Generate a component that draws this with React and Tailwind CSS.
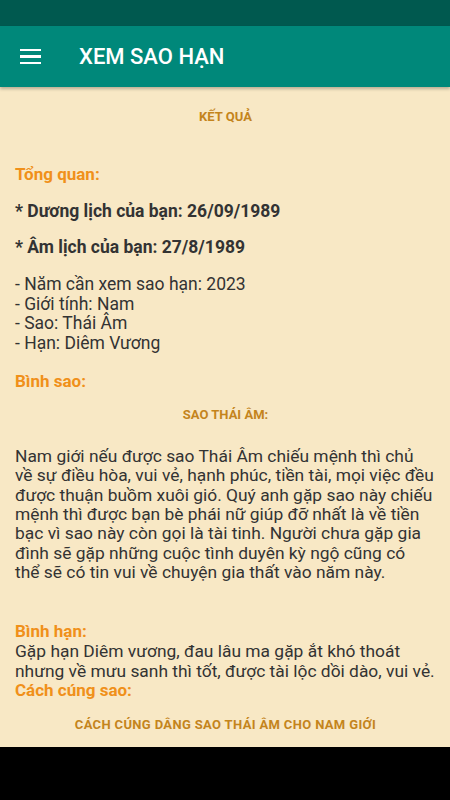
import React from "react";

export default function App() {
  const font = { fontFamily: "Roboto, 'Noto Sans', sans-serif" };
  return (
    <div className="w-[450px] h-[800px] flex flex-col bg-black overflow-hidden" style={font}>
      <div className="h-[26px] bg-[#00594f] shrink-0" />
      <div className="h-[61px] bg-[#00887a] shrink-0 flex items-center shadow-[0_2px_3px_rgba(0,0,0,0.25)] relative z-10">
        <div className="ml-[20px] w-[21px] flex flex-col gap-[4px]">
          <div className="h-[2.5px] bg-white" />
          <div className="h-[2.5px] bg-white" />
          <div className="h-[2.5px] bg-white" />
        </div>
        <div className="ml-[38px] text-white text-[22px] font-medium">XEM SAO HẠN</div>
      </div>
      <div className="h-[660px] bg-[#f8e8c5] pl-[15px] pr-[4px] shrink-0 text-[#333333]">
        <div className="mt-[20px] leading-[20px] text-center text-[13px] font-bold text-[#c4841c] pr-[10px]">KẾT QUẢ</div>
        <div className="mt-[37px] leading-[20px] text-[17px] font-bold text-[#f0901a]">Tổng quan:</div>
        <div className="mt-[17px] leading-[20px] text-[17.5px] font-bold">* Dương lịch của bạn: 26/09/1989</div>
        <div className="mt-[16px] leading-[20px] text-[17.5px] font-bold">* Âm lịch của bạn: 27/8/1989</div>
        <div className="mt-[18px] leading-[19.7px] text-[17.5px]">
          <div>- Năm cần xem sao hạn: 2023</div>
          <div>- Giới tính: Nam</div>
          <div>- Sao: Thái Âm</div>
          <div>- Hạn: Diêm Vương</div>
        </div>
        <div className="mt-[17px] leading-[20px] text-[17px] font-bold text-[#f0901a]">Bình sao:</div>
        <div className="mt-[14px] leading-[20px] text-center text-[13px] font-bold text-[#c4841c] pr-[10px]">SAO THÁI ÂM:</div>
        <p className="mt-[22px] leading-[19.4px] text-[17.4px] whitespace-nowrap">
          Nam giới nếu được sao Thái Âm chiếu mệnh thì chủ<br />
          về sự điều hòa, vui vẻ, hạnh phúc, tiền tài, mọi việc đều<br />
          được thuận buồm xuôi gió. Quý anh gặp sao này chiếu<br />
          mệnh thì được bạn bè phái nữ giúp đỡ nhất là về tiền<br />
          bạc vì sao này còn gọi là tài tinh. Người chưa gặp gia<br />
          đình sẽ gặp những cuộc tình duyên kỳ ngộ cũng có<br />
          thể sẽ có tin vui về chuyện gia thất vào năm này.
        </p>
        <div className="mt-[38px] leading-[20px] text-[17px] font-bold text-[#f0901a]">Bình hạn:</div>
        <p className="leading-[20px] text-[17.4px] whitespace-nowrap">
          Gặp hạn Diêm vương, đau lâu ma gặp ắt khó thoát<br />
          nhưng về mưu sanh thì tốt, được tài lộc dồi dào, vui vẻ.
        </p>
        <div className="leading-[19.5px] text-[17px] font-bold text-[#f0901a]">Cách cúng sao:</div>
        <div className="mt-[15px] leading-[20px] text-center text-[13px] tracking-[0.35px] font-bold text-[#c4841c] pr-[10px]">CÁCH CÚNG DÂNG SAO THÁI ÂM CHO NAM GIỚI</div>
      </div>
      <div className="flex-1 bg-black" />
    </div>
  );
}
